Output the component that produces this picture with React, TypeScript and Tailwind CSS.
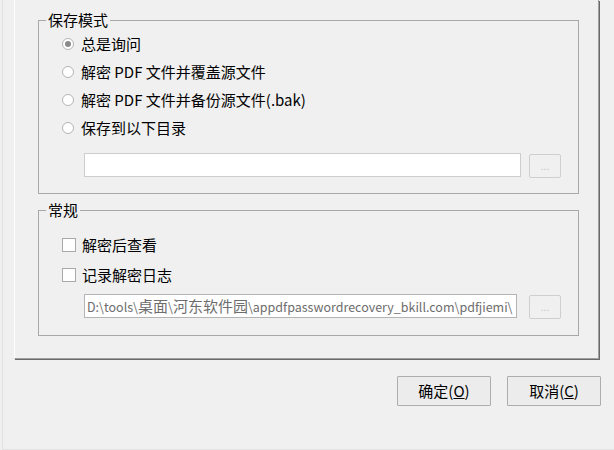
import React from 'react';

function Radio({ checked, label }: { checked?: boolean; label: string }) {
  return (
    <div className="flex items-center h-[28px] gap-[7px]">
      <span className="w-[12px] h-[12px] rounded-full border border-[#b4b4b4] bg-white flex items-center justify-center">
        {checked && <span className="w-[6px] h-[6px] rounded-full bg-[#8a8a8a]" />}
      </span>
      <span>{label}</span>
    </div>
  );
}

function Check({ label }: { label: string }) {
  return (
    <div className="flex items-center h-[30px] gap-[6px]">
      <span className="w-[14px] h-[14px] border border-[#a9a9a9] bg-white" />
      <span>{label}</span>
    </div>
  );
}

function BrowseButton() {
  return (
    <button className="w-[32px] h-[24px] mt-[1px] border border-[#cfcfcf] rounded-[2px] bg-[#f0f0f0] text-[#c4c4c4] text-[10px] leading-none flex items-end justify-center pb-[6px]">
      ...
    </button>
  );
}

export default function App() {
  return (
    <div className="w-[614px] h-[450px] bg-[#f0f0f0] pl-[2px] overflow-hidden text-[15px] leading-[18px] text-black font-['Noto_Sans_CJK_SC','Liberation_Sans',sans-serif]">
      <div className="h-[450px] border-l border-b border-[#e2e2e2] pl-[11px]">
        {/* Tab page */}
        <div className="w-[585px] h-[359px] border-l border-l-white border-r border-b border-r-[#a0a0a0] border-b-[#a0a0a0] shadow-[1px_1px_0_#696969] pl-[23px] pt-[11px]">
          <fieldset className="w-[541px] border border-[#a8a8a8] pl-[23px] pt-[1px] pb-[15px]">
            <legend className="ml-[-16px] px-[2px] leading-[18px]">保存模式</legend>
            <Radio checked label="总是询问" />
            <Radio label="解密 PDF 文件并覆盖源文件" />
            <Radio label="解密 PDF 文件并备份源文件(.bak)" />
            <Radio label="保存到以下目录" />
            <div className="flex items-start gap-[8px] mt-[11px] ml-[22px]">
              <div className="w-[437px] h-[24px] bg-white border border-[#cdcdcd]" />
              <BrowseButton />
            </div>
          </fieldset>

          <fieldset className="w-[541px] mt-[7px] border border-[#a8a8a8] pl-[23px] pt-[11px] pb-[16px]">
            <legend className="ml-[-16px] px-[2px] leading-[18px]">常规</legend>
            <Check label="解密后查看" />
            <Check label="记录解密日志" />
            <div className="flex items-start gap-[12px] mt-[4px] ml-[22px]">
              <div className="w-[433px] h-[24px] bg-white border border-[#b4b4b4] pl-[2px] overflow-hidden whitespace-nowrap text-[#6d6d6d] leading-[22px]">
                <span className="text-[12.5px]">D:\tools\</span>桌面<span className="text-[12.5px]">\</span>河东软件园
                <span className="text-[12.5px]">\appdfpasswordrecovery_bkill.com\pdfjiemi\</span>
              </div>
              <BrowseButton />
            </div>
          </fieldset>
        </div>

        <div className="w-[587px] flex justify-end gap-[16px] mt-[17px]">
          <button className="w-[94px] h-[30px] border border-[#adadad] bg-[#ececec] rounded-[1px]">
            确定(<u>O</u>)
          </button>
          <button className="w-[94px] h-[30px] border border-[#adadad] bg-[#ececec] rounded-[1px]">
            取消(<u>C</u>)
          </button>
        </div>
      </div>
    </div>
  );
}
